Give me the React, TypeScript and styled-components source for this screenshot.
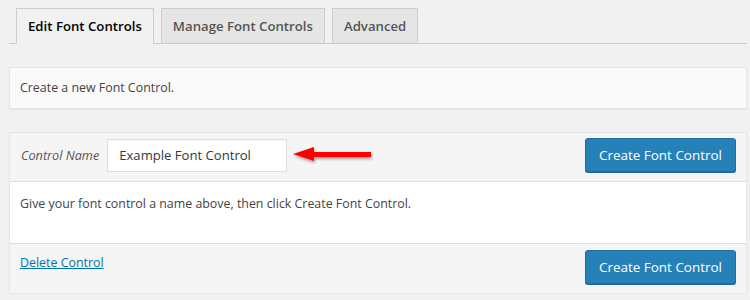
import React from "react";
import styled, { createGlobalStyle } from "styled-components";

const Global = createGlobalStyle`
  html, body { margin: 0; padding: 0; background: #f1f1f1; }
  body { font-family: "Open Sans", "Noto Sans", sans-serif; color: #444; }
  * { box-sizing: border-box; }
`;

const Page = styled.div`
  padding: 8px 3px 0 9px;
  display: flex;
  flex-direction: column;
`;

const TabBar = styled.div`
  display: flex;
  gap: 7px;
  padding-left: 7px;
  border-bottom: 1px solid #ccc;
`;

const Tab = styled.div<{ $active?: boolean }>`
  font-size: 13.2px;
  font-weight: 600;
  line-height: 24px;
  padding: 5px 11px;
  border: 1px solid #ccc;
  margin-bottom: -1px;
  background: ${(p) => (p.$active ? "#f1f1f1" : "#e5e5e5")};
  border-bottom-color: ${(p) => (p.$active ? "#f1f1f1" : "#ccc")};
  color: ${(p) => (p.$active ? "#000" : "#555")};
  white-space: nowrap;
`;

const Notice = styled.div`
  margin-top: 23px;
  background: #fafafa;
  border: 1px solid #e5e5e5;
  box-shadow: 0 1px 1px rgba(0, 0, 0, 0.04);
  padding: 10px 10px;
  font-size: 12.4px;
  line-height: 20px;
  color: #444;
`;

const Panel = styled.div`
  margin-top: 23px;
  border: 1px solid #e5e5e5;
  box-shadow: 0 1px 1px rgba(0, 0, 0, 0.04);
  background: #fff;
  display: flex;
  flex-direction: column;
`;

const Bar = styled.div<{ $top?: boolean }>`
  background: #f5f5f5;
  display: flex;
  align-items: center;
  padding: ${(p) => (p.$top ? "5px 10px 9px 11px" : "6px 10px 9px 10px")};
  border-${(p) => (p.$top ? "bottom" : "top")}: 1px solid #ddd;
`;

const Label = styled.span`
  font-size: 12.7px;
  font-style: italic;
  color: #555;
  margin-right: 8px;
`;

const NameInput = styled.input`
  width: 180px;
  height: 33px;
  border: 1px solid #ddd;
  background: #fff;
  padding: 0 11px;
  font-family: inherit;
  font-size: 13.1px;
  color: #32373c;
  box-shadow: inset 0 1px 2px rgba(0, 0, 0, 0.04);
  outline: none;
`;

const ArrowWrap = styled.div`
  margin-left: 5px;
  display: flex;
  align-items: center;
`;

const Spacer = styled.div`
  flex: 1;
`;

const Button = styled.button`
  height: 34px;
  width: 151px;
  background: #2681b8;
  border: 1px solid #1f6fa0;
  border-radius: 3px;
  box-shadow: 0 1px 0 #1b6494;
  color: #fff;
  font-family: inherit;
  font-size: 13.45px;
  padding: 0 10px;
  white-space: nowrap;
  cursor: pointer;
`;

const Body = styled.div`
  padding: 12px 10px 29px;
  font-size: 12.4px;
  line-height: 20px;
  color: #444;
`;

const DeleteLink = styled.a`
  font-size: 12.4px;
  color: #0073aa;
  text-decoration: underline;
  margin-top: -10px;
`;

const Arrow = () => (
  <svg width="82" height="20" viewBox="0 0 82 20">
    <defs>
      <filter id="sh" x="-10%" y="-50%" width="130%" height="200%">
        <feDropShadow dx="1" dy="2" stdDeviation="1.5" floodColor="#000" floodOpacity="0.35" />
      </filter>
    </defs>
    <g filter="url(#sh)">
      <polygon points="1,9 22,2 22,7 79,7 79,12 22,12 22,16" fill="#ff0000" />
    </g>
  </svg>
);

export default function App() {
  return (
    <>
      <Global />
      <Page>
        <TabBar>
          <Tab $active>Edit Font Controls</Tab>
          <Tab>Manage Font Controls</Tab>
          <Tab>Advanced</Tab>
        </TabBar>
        <Notice>Create a new Font Control.</Notice>
        <Panel>
          <Bar $top>
            <Label>Control Name</Label>
            <NameInput defaultValue="Example Font Control" />
            <ArrowWrap>
              <Arrow />
            </ArrowWrap>
            <Spacer />
            <Button>Create Font Control</Button>
          </Bar>
          <Body>Give your font control a name above, then click Create Font Control.</Body>
          <Bar>
            <DeleteLink href="#">Delete Control</DeleteLink>
            <Spacer />
            <Button>Create Font Control</Button>
          </Bar>
        </Panel>
      </Page>
    </>
  );
}
